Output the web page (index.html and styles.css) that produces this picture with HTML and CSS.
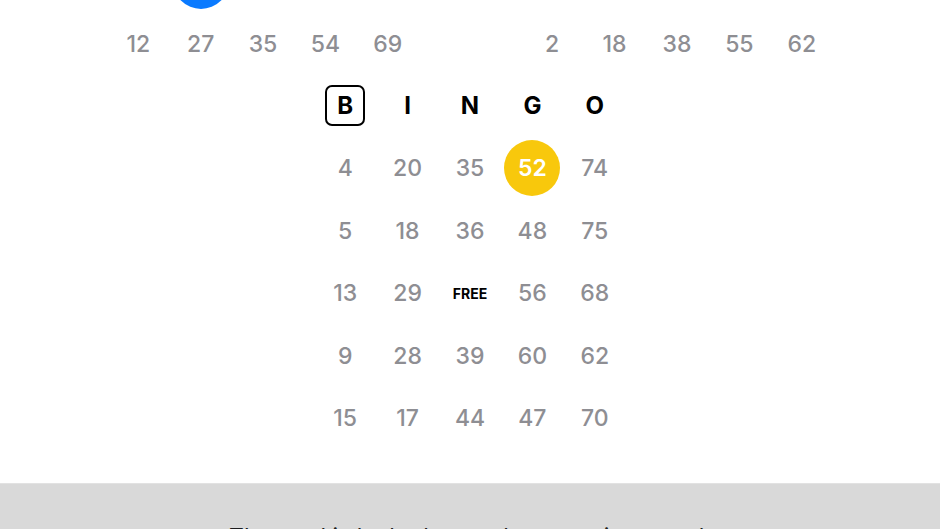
FILE: index.html
```html
<!DOCTYPE html>
<html>
<head>
<meta charset="utf-8">
<link rel="stylesheet" href="styles.css">
</head>
<body>
<div class="page">
  <div class="prev-cards">
    <div class="mini-card">
      <div class="cell"></div><div class="cell"><span class="dot blue"></span></div><div class="cell"></div><div class="cell"></div><div class="cell"></div>
      <div class="cell num">12</div><div class="cell num">27</div><div class="cell num">35</div><div class="cell num">54</div><div class="cell num">69</div>
    </div>
    <div class="mini-card">
      <div class="cell"></div><div class="cell"></div><div class="cell"></div><div class="cell"></div><div class="cell"></div>
      <div class="cell num">2</div><div class="cell num">18</div><div class="cell num">38</div><div class="cell num">55</div><div class="cell num">62</div>
    </div>
  </div>

  <div class="card">
    <div class="cell head"><span class="boxed">B</span></div>
    <div class="cell head">I</div>
    <div class="cell head">N</div>
    <div class="cell head">G</div>
    <div class="cell head">O</div>

    <div class="cell num">4</div><div class="cell num">20</div><div class="cell num">35</div><div class="cell"><span class="dot yellow">52</span></div><div class="cell num">74</div>
    <div class="cell num">5</div><div class="cell num">18</div><div class="cell num">36</div><div class="cell num">48</div><div class="cell num">75</div>
    <div class="cell num">13</div><div class="cell num">29</div><div class="cell free">FREE</div><div class="cell num">56</div><div class="cell num">68</div>
    <div class="cell num">9</div><div class="cell num">28</div><div class="cell num">39</div><div class="cell num">60</div><div class="cell num">62</div>
    <div class="cell num">15</div><div class="cell num">17</div><div class="cell num">44</div><div class="cell num">47</div><div class="cell num">70</div>
  </div>

  <div class="footer">
    <p class="footer-text">The card is locked once the game is started.</p>
  </div>
</div>
</body>
</html>
```
FILE: styles.css
```css
* { box-sizing: border-box; }
html, body {
  margin: 0;
  padding: 0;
  background: #ffffff;
  font-family: "Inter", "Roboto", "Liberation Sans", sans-serif;
}
.page {
  width: 940px;
  height: 529px;
  overflow: hidden;
  display: flex;
  flex-direction: column;
  align-items: center;
}
.prev-cards {
  display: flex;
  gap: 102px;
  margin-top: -50px;
}
.mini-card, .card {
  display: grid;
  grid-template-columns: repeat(5, 62.4px);
  grid-auto-rows: 62.4px;
}
.cell {
  display: flex;
  align-items: center;
  justify-content: center;
}
.num {
  font-size: 23px;
  font-weight: 500;
  color: #8e8e93;
}
.head {
  font-size: 24px;
  font-weight: 700;
  color: #000;
}
.boxed {
  width: 40px;
  height: 41px;
  border: 2.5px solid #000;
  border-radius: 7px;
  display: flex;
  align-items: center;
  justify-content: center;
}
.free {
  font-size: 14px;
  font-weight: 700;
  color: #000;
}
.dot {
  width: 56px;
  height: 56px;
  border-radius: 50%;
  display: flex;
  align-items: center;
  justify-content: center;
  font-size: 23px;
  font-weight: 600;
  color: #fff;
}
.blue { background: #0a7aff; }
.yellow { background: #f8c80c; }
.footer {
  margin-top: 34px;
  width: 100%;
  flex: 1;
  background: #d9d9d9;
  border-top: 1px solid #e2e2e2;
  display: flex;
  justify-content: center;
}
.footer-text {
  margin: 0;
  padding-top: 38px;
  font-size: 23px;
  line-height: 30px;
  color: #1c1c1e;
}
```
